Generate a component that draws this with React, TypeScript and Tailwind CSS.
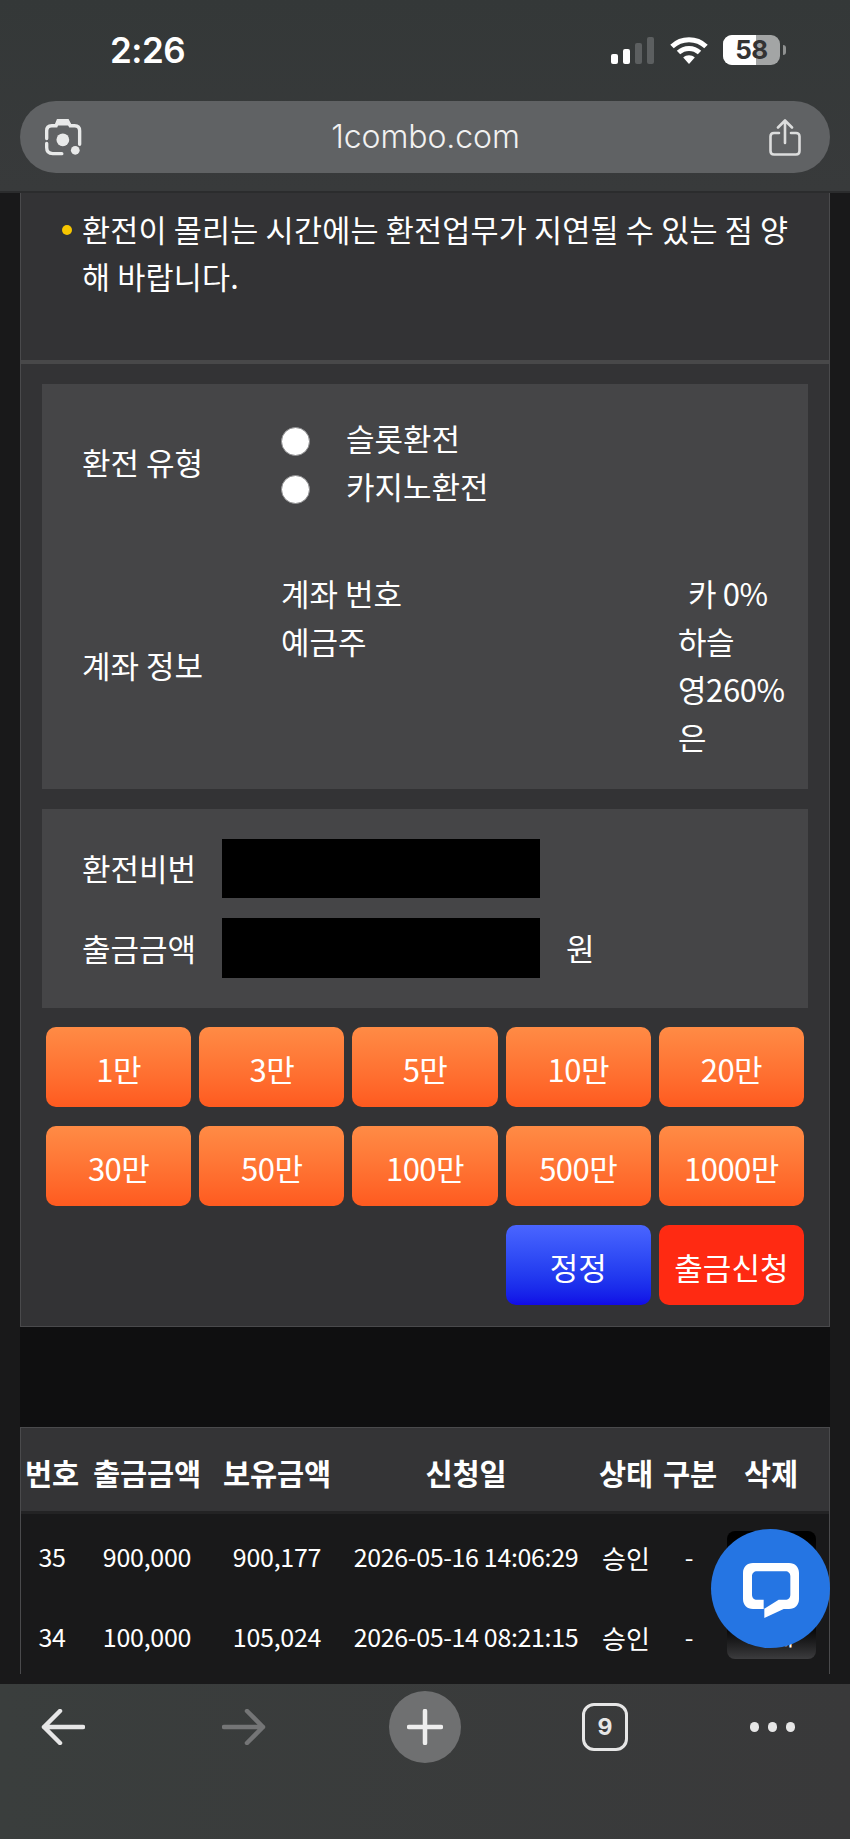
const amounts = ["1만", "3만", "5만", "10만", "20만", "30만", "50만", "100만", "500만", "1000만"];
const rows = [
  ["35", "900,000", "900,177", "2026-05-16 14:06:29"],
  ["34", "100,000", "105,024", "2026-05-14 08:21:15"],
];
const COLS = "grid grid-cols-[62px_128px_132px_246px_74px_52px_112px] items-center text-center";

export default function App() {
  return (
    <div className="relative w-[850px] h-[1839px] overflow-hidden flex flex-col bg-[#19191a] text-white font-['Noto_Sans_CJK_KR','Liberation_Sans',sans-serif]">
      {/* browser top bar */}
      <header className="h-[193px] shrink-0 bg-gradient-to-b from-[#343838] to-[#383a3b] border-b-2 border-[#2b2c2d] flex flex-col">
        <div className="h-[101px] shrink-0 flex items-start pt-[27px] pl-[110px] pr-[64px] justify-between">
          <span className="text-[35px] leading-[46px] font-semibold font-['Inter',sans-serif] tracking-[-0.5px]">2:26</span>
          <div className="flex items-center gap-[15px] pt-[8px]">
            <svg width="44" height="27" viewBox="0 0 44 27" fill="#fff">
              <rect x="0" y="17" width="7" height="10" rx="2" />
              <rect x="12" y="12" width="7" height="15" rx="2" />
              <rect x="24" y="6" width="7" height="21" rx="2" fill="#5c5f60" />
              <rect x="36" y="0" width="7" height="27" rx="2" fill="#5c5f60" />
            </svg>
            <svg width="38" height="27" viewBox="0 0 38 27" fill="none" stroke="#fff" strokeWidth="5">
              <path d="M2 9.5C11.5 .5 26.5 .5 36 9.5" />
              <path d="M8.5 15.5C14.5 10 23.5 10 29.5 15.5" />
              <path d="M19 27l-5.8-6.5C16.5 17.5 21.5 17.5 24.8 20.5Z" fill="#fff" stroke="none" />
            </svg>
            <div className="flex items-center gap-[3px]">
              <div className="relative w-[57px] h-[30px] rounded-[9px] overflow-hidden bg-[#a3a5a5] flex items-center justify-center">
                <div className="absolute left-0 top-0 bottom-0 w-[33px] bg-white" />
                <span className="relative text-[26px] leading-none font-bold text-[#333] font-['Inter',sans-serif] tracking-[-0.5px]">58</span>
              </div>
              <div className="w-[3px] h-[10px] rounded-r-full bg-[#8f9191]" />
            </div>
          </div>
        </div>
        <div className="mx-[20px] h-[72px] rounded-full bg-[#606264] flex items-center justify-between pl-[25px] pr-[29px]">
          <svg width="37" height="37" viewBox="75 55 110 110" fill="none" stroke="#e8e9e9" strokeWidth="10" strokeLinecap="round">
            <path d="M80 113V90Q80 75 95 75H108L114 60H142L150 75H163Q178 75 178 90V130" />
            <path d="M108 72L114 60H142L150 72Z" fill="#e8e9e9" strokeWidth="4" />
            <path d="M80 128V140Q80 158 98 158H125" />
            <circle cx="128" cy="117" r="19" fill="#e8e9e9" stroke="none" />
            <circle cx="165" cy="148" r="13" fill="#e8e9e9" stroke="none" />
          </svg>
          <span className="text-[32px] leading-none text-[#f1f1f1] font-['Inter',sans-serif] font-light tracking-[-0.1px]">1combo.com</span>
          <svg width="32" height="37" viewBox="0 0 32 37" fill="none" stroke="#dcdddd" strokeWidth="2.6" strokeLinecap="round" strokeLinejoin="round">
            <path d="M10 14H5C2.8 14 1.5 15.3 1.5 17.5V32C1.5 34.2 2.8 35.5 5 35.5H27C29.2 35.5 30.5 34.2 30.5 32V17.5C30.5 15.3 29.2 14 27 14H22" />
            <path d="M16 24V2M9 8.5L16 1.5L23 8.5" />
          </svg>
        </div>
      </header>

      {/* page content */}
      <main className="flex-1 min-h-0 overflow-hidden px-[20px] bg-[#19191a]">
        <section className="h-[1134px] border-x border-b border-[#4a4a4c] bg-[#333335]">
          <div className="h-[167px] pt-[13px] pl-[61px] pr-[30px] text-[30.5px] leading-[47px] tracking-[0.2px] relative">
            <span className="absolute left-[41px] top-[32px] w-[10px] h-[10px] rounded-full bg-[#f7c600]" />
            환전이 몰리는 시간에는 환전업무가 지연될 수 있는 점 양해 바랍니다.
          </div>
          <div className="h-[4px] bg-[#484849]" />

          <div className="mx-[21px] mt-[20px] h-[405px] bg-[#454547] pt-[30px] pl-[40px]">
            <div className="grid grid-cols-[199px_397px_1fr] text-[31px] leading-[48px]">
              <div className="self-center">환전 유형</div>
              <div className="col-span-2 flex flex-col">
                {["슬롯환전", "카지노환전"].map((t) => (
                  <label key={t} className="flex items-center h-[48px]">
                    <span className="w-[29px] h-[29px] mt-[6px] rounded-full bg-white border border-[#8c8c8e]" />
                    <span className="ml-[36px]">{t}</span>
                  </label>
                ))}
              </div>
            </div>
            <div className="grid grid-cols-[199px_397px_1fr] text-[31px] leading-[48px] mt-[59px]">
              <div className="self-center">계좌 정보</div>
              <div>
                <div>계좌 번호</div>
                <div>예금주</div>
              </div>
              <div className="w-[110px] tracking-[-0.4px]">
                <div className="pl-[10px]">카 0%</div>
                <div>하슬</div>
                <div>영260%</div>
                <div>은</div>
              </div>
            </div>
          </div>

          <div className="mx-[21px] mt-[20px] h-[199px] bg-[#454547] pt-[30px] pl-[40px] text-[31px]">
            <div className="flex items-center h-[59px]">
              <span className="w-[140px]">환전비번</span>
              <input className="w-[318px] h-[59px] bg-black" aria-label="환전비번" />
            </div>
            <div className="flex items-center h-[60px] mt-[20px]">
              <span className="w-[140px]">출금금액</span>
              <input className="w-[318px] h-[60px] bg-black" aria-label="출금금액" />
              <span className="ml-[26px]">원</span>
            </div>
          </div>

          <div className="mt-[19px] px-[25px] grid grid-cols-5 gap-x-[8px] gap-y-[19px]">
            {amounts.map((a) => (
              <button key={a} className="h-[80px] pt-[4px] rounded-[10px] bg-gradient-to-b from-[#ff8b45] to-[#ff5a1f] text-[31px] text-white tracking-[-0.5px]">
                {a}
              </button>
            ))}
            <button className="col-start-4 h-[80px] pt-[4px] rounded-[10px] bg-gradient-to-b from-[#4a65ff] to-[#1209e6] text-[31px] text-white">
              정정
            </button>
            <button className="h-[80px] pt-[4px] rounded-[10px] bg-[#ff2a12] text-[31px] text-white">출금신청</button>
          </div>
        </section>

        <div className="h-[100px] bg-[#0f0f10]" />

        <section className="border-x border-t border-[#4a4a4c] bg-[#19191a]">
          <div className={`${COLS} h-[86px] pt-[6px] bg-[#343436] border-b-[3px] border-[#232324] text-[29.5px] font-bold tracking-[-0.2px] whitespace-nowrap`}>
            {["번호", "출금금액", "보유금액", "신청일", "상태", "구분", "삭제"].map((h) => (
              <div key={h}>{h}</div>
            ))}
          </div>
          {rows.map((r) => (
            <div key={r[0]} className={`${COLS} h-[80px] pt-[6px] text-[25px]`}>
              <div className="tracking-[-0.5px]">{r[0]}</div>
              <div className="tracking-[-0.25px]">{r[1]}</div>
              <div className="tracking-[-0.25px]">{r[2]}</div>
              <div className="tracking-[-0.35px] whitespace-nowrap">{r[3]}</div>
              <div className="text-[26px]">승인</div>
              <div>-</div>
              <div className="flex justify-center">
                <button className="-mt-[5px] w-[89px] h-[48px] rounded-[8px] bg-gradient-to-b from-black to-[#3c3c3e] text-[25px] text-white">삭제</button>
              </div>
            </div>
          ))}
        </section>
      </main>

      {/* browser bottom bar */}
      <footer className="h-[155px] shrink-0 bg-gradient-to-r from-[#3a3e3d] to-[#39393a] relative z-10 flex items-start pt-[7px]">
        <div className="ml-[41px] h-[72px] flex items-center">
          <svg width="44" height="36" viewBox="0 0 44 36" fill="none" stroke="#e6e6e6" strokeWidth="4.5" strokeLinecap="round" strokeLinejoin="round">
            <path d="M42 18H3M19 2L3 18L19 34" />
          </svg>
        </div>
        <div className="ml-[137px] h-[72px] flex items-center">
          <svg width="44" height="36" viewBox="0 0 44 36" fill="none" stroke="#747576" strokeWidth="4.5" strokeLinecap="round" strokeLinejoin="round">
            <path d="M2 18H41M25 2L41 18L25 34" />
          </svg>
        </div>
        <div className="ml-[123px] w-[72px] h-[72px] rounded-full bg-[#6f7071] flex items-center justify-center">
          <svg width="36" height="36" viewBox="0 0 36 36" stroke="#eeeeee" strokeWidth="4.5" strokeLinecap="round">
            <path d="M18 2V34M2 18H34" />
          </svg>
        </div>
        <div className="ml-[121px] mt-[12px] w-[46px] h-[48px] rounded-[12px] border-[3.5px] border-[#e6e6e6] flex items-center justify-center text-[23px] font-bold leading-none font-['Inter',sans-serif] text-[#e6e6e6]">
          9
        </div>
        <div className="ml-[122px] h-[72px] flex items-center gap-[9px]">
          <span className="w-[9px] h-[10px] rounded-full bg-[#e6e6e6]" />
          <span className="w-[9px] h-[10px] rounded-full bg-[#e6e6e6]" />
          <span className="w-[9px] h-[10px] rounded-full bg-[#e6e6e6]" />
        </div>
      </footer>

      {/* floating chat button */}
      <div className="absolute left-[711px] top-[1529px] w-[119px] h-[119px] rounded-full bg-[#2575e3] flex items-center justify-center z-20">
        <svg className="mt-[5px]" width="56" height="56" viewBox="128 160 168 168" fill="none">
          <path d="M158 160H266C284 160 296 172 296 190V268C296 286 284 298 266 298H250L192 325V298H158C140 298 128 286 128 268V190C128 172 140 160 158 160Z" fill="#fff" />
          <path d="M170 185H255C264 185 270 191 270 200V255C270 264 264 270 255 270H235L192 297L190 298V270H170C161 270 155 264 155 255V200C155 191 161 185 170 185Z" fill="#2575e3" />
        </svg>
      </div>
    </div>
  );
}
